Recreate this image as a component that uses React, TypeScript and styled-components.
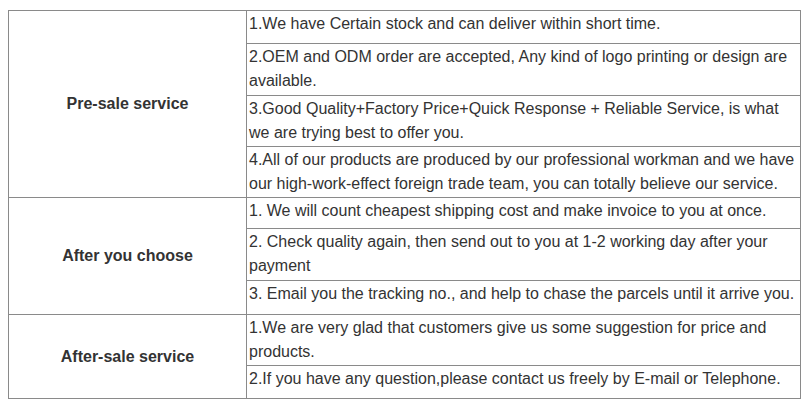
import React from "react";
import styled, { createGlobalStyle } from "styled-components";

const Global = createGlobalStyle`
  html, body { background: #ffffff; }
  body {
    margin: 10px 0 0 8px;
    font-family: "Liberation Sans", Arial, sans-serif;
    color: #333333;
  }
`;

const Table = styled.table`
  width: 793px;
  border-collapse: collapse;
  table-layout: fixed;
  font-size: 16px;
`;

const Row = styled.tr<{ $h: number }>`
  height: ${(p) => p.$h}px;
`;

const HeadCell = styled.td`
  border: 1px solid #8a8a8a;
  text-align: center;
  vertical-align: middle;
  font-weight: bold;
  font-size: 16px;
  color: #333333;
  padding: 0;
`;

const ItemCell = styled.td`
  border: 1px solid #8a8a8a;
  vertical-align: top;
  line-height: 24px;
  padding: 1px 2px 0;
  color: #333333;
`;

type Section = { title: string; items: { text: string; h: number }[] };

const sections: Section[] = [
  {
    title: "Pre-sale service",
    items: [
      { text: "1.We have Certain stock and can deliver within short time.", h: 33 },
      {
        text: "2.OEM and ODM order are accepted, Any kind of logo printing or design are available.",
        h: 52,
      },
      {
        text: "3.Good Quality+Factory Price+Quick Response + Reliable Service, is what we are trying best to offer you.",
        h: 51,
      },
      {
        text: "4.All of our products are produced by our professional workman and we have our high-work-effect foreign trade team, you can totally believe our service.",
        h: 51,
      },
    ],
  },
  {
    title: "After you choose",
    items: [
      { text: "1. We will count cheapest shipping cost and make invoice to you at once.", h: 31 },
      {
        text: "2. Check quality again, then send out to you at 1-2 working day after your payment",
        h: 52,
      },
      {
        text: "3. Email you the tracking no., and help to chase the parcels until it arrive you.",
        h: 34,
      },
    ],
  },
  {
    title: "After-sale service",
    items: [
      {
        text: "1.We are very glad that customers give us some suggestion for price and products.",
        h: 51,
      },
      {
        text: "2.If you have any question,please contact us freely by E-mail or Telephone.",
        h: 33,
      },
    ],
  },
];

export default function App() {
  return (
    <>
      <Global />
      <Table>
        <colgroup>
          <col style={{ width: 238 }} />
          <col />
        </colgroup>
        <tbody>
          {sections.map((s) =>
            s.items.map((it, i) => (
              <Row key={s.title + i} $h={it.h}>
                {i === 0 && <HeadCell rowSpan={s.items.length}>{s.title}</HeadCell>}
                <ItemCell>{it.text}</ItemCell>
              </Row>
            ))
          )}
        </tbody>
      </Table>
    </>
  );
}
